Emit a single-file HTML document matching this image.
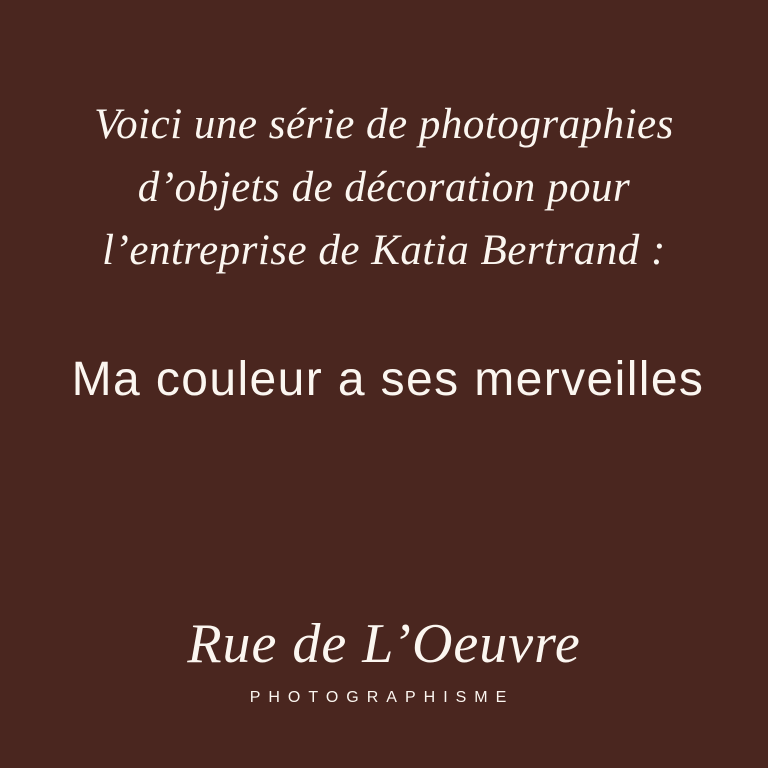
<!DOCTYPE html>
<html><head><meta charset="utf-8"><style>
html,body{margin:0;padding:0}
body{width:768px;height:768px;background:#4a261f;color:#fbf6f0;position:relative;overflow:hidden}
.s{position:absolute;left:0;width:768px;text-align:center;font-family:"Liberation Serif",serif;font-style:italic;white-space:nowrap}
.l{font-size:43px;letter-spacing:0.5px}
.m{position:absolute;left:0;width:768px;text-align:center;font-family:"Liberation Sans",sans-serif;font-size:48px;white-space:nowrap;letter-spacing:1.4px;padding-left:8px;box-sizing:border-box}
.p{position:absolute;left:0;width:768px;text-align:center;font-family:"Liberation Sans",sans-serif;font-size:16px;letter-spacing:8px;white-space:nowrap;padding-right:4px;box-sizing:border-box}
</style></head><body>
<div class="s l" style="top:100px">Voici une série de photographies</div>
<div class="s l" style="top:163px">d’objets de décoration pour</div>
<div class="s l" style="top:226px">l’entreprise de Katia Bertrand :</div>
<div class="m" style="top:352px">Ma couleur a ses merveilles</div>
<div class="s" style="top:612px;font-size:56px;letter-spacing:1px">Rue de L’Oeuvre</div>
<div class="p" style="top:689px">PHOTOGRAPHISME</div>
</body></html>
